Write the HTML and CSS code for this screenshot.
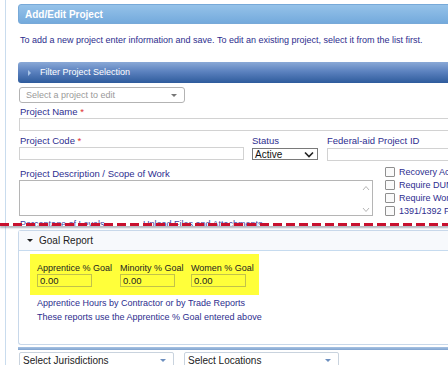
FILE: index.html
```html
<!DOCTYPE html>
<html>
<head>
<meta charset="utf-8">
<link rel="stylesheet" href="styles.css">
</head>
<body>
<div class="page">
  <div class="main">
    <div class="hdr">Add/Edit Project</div>
    <p class="intro">To add a new project enter information and save. To edit an existing project, select it from the list first.</p>
    <div class="filter"><span class="tri"></span>Filter Project Selection</div>
    <div class="combo"><span>Select a project to edit</span><span class="carr"></span></div>
    <div class="lbl">Project Name <span class="req">*</span></div>
    <div class="inp full"></div>
    <div class="row3">
      <div class="col code">
        <div class="lbl">Project Code <span class="req">*</span></div>
        <div class="inp"></div>
      </div>
      <div class="col status">
        <div class="lbl">Status</div>
        <div class="sel"><span>Active</span><svg class="chev" width="10" height="7" viewBox="0 0 10 7"><path d="M1 1.5 L5 5.5 L9 1.5" fill="none" stroke="#222" stroke-width="1.6"/></svg></div>
      </div>
      <div class="col fed">
        <div class="lbl">Federal-aid Project ID</div>
        <div class="inp"></div>
      </div>
    </div>
    <div class="descrow">
      <div class="desc">
        <div class="lbl">Project Description / Scope of Work</div>
        <div class="ta">
          <div class="sb">
            <svg width="8" height="6" viewBox="0 0 8 6"><path d="M1 5 L4 1.5 L7 5" fill="none" stroke="#b5b5b5" stroke-width="1"/></svg>
            <svg width="8" height="6" viewBox="0 0 8 6"><path d="M1 1 L4 4.5 L7 1" fill="none" stroke="#b5b5b5" stroke-width="1"/></svg>
          </div>
        </div>
      </div>
      <div class="checks">
        <div class="chk"><span class="box"></span>Recovery Act Project</div>
        <div class="chk"><span class="box"></span>Require DUNS Number</div>
        <div class="chk"><span class="box"></span>Require Workforce</div>
        <div class="chk"><span class="box"></span>1391/1392 Project</div>
      </div>
    </div>
    <div class="hidden-row"><span class="l">Percentage of Levels</span><span class="r">Upload Files and Attachments</span></div>
  </div>
  <div class="tear"></div>
  <div class="panel">
    <div class="phead"><span class="dtri"></span>Goal Report</div>
    <div class="pbody">
      <div class="yellow">
        <div class="goal">
          <div class="glbl">Apprentice % Goal</div>
          <div class="ginp">0.00</div>
        </div>
        <div class="goal">
          <div class="glbl">Minority % Goal</div>
          <div class="ginp">0.00</div>
        </div>
        <div class="goal">
          <div class="glbl">Women % Goal</div>
          <div class="ginp">0.00</div>
        </div>
      </div>
      <p class="note">Apprentice Hours by Contractor or by Trade Reports<br>These reports use the Apprentice % Goal entered above</p>
    </div>
  </div>
  <div class="bar"></div>
  <div class="bottom">
    <div class="bsel"><span>Select Jurisdictions</span><span class="barr"></span></div>
    <div class="bsel"><span>Select Locations</span><span class="barr"></span></div>
  </div>
</div>
</body>
</html>
```
FILE: styles.css
```css
* { box-sizing: border-box; }
html, body { margin: 0; padding: 0; background: #fff; }
body {
  width: 448px;
  height: 365px;
  overflow: hidden;
  font-family: "Liberation Sans", Arial, sans-serif;
  font-size: 9px;
  color: #2b2b8f;
}
.page {
  margin-left: 5px;
  border-left: 1px solid #c9dcee;
  padding-left: 12px;
  padding-top: 4px;
  height: 365px;
  width: 480px;
}
.main { position: relative; }
.hdr {
  height: 20px;
  line-height: 20px;
  padding-left: 6px;
  color: #fff;
  font-weight: bold;
  font-size: 10px;
  background: linear-gradient(#95c2e9, #74aadc);
  border: 1px solid #77a9d8;
  border-radius: 3px 0 0 3px;
}
.intro {
  margin: 11px 0 0 2px;
  height: 11px;
  line-height: 11px;
  font-size: 9px;
  color: #2d2d8e;
}
.filter {
  margin-top: 16px;
  height: 21px;
  line-height: 21px;
  color: #fff;
  font-size: 9px;
  padding-left: 10px;
  background: linear-gradient(#8aa9d7 0%, #5c82bf 45%, #2e5b9c 100%);
  border-radius: 3px 0 0 3px;
  display: flex;
  align-items: center;
}
.tri {
  width: 0; height: 0;
  border-top: 3px solid transparent;
  border-bottom: 3px solid transparent;
  border-left: 3px solid #a8c4e6;
  margin-right: 9px;
}
.combo {
  margin: 4px 0 0 1px;
  width: 166px;
  height: 16px;
  border: 1px solid #b3b3b3;
  border-radius: 3px;
  display: flex;
  align-items: center;
  justify-content: space-between;
  padding: 0 7px 0 6px;
  color: #9a9a9a;
  font-size: 9px;
}
.carr, .barr {
  width: 0; height: 0;
  border-left: 3px solid transparent;
  border-right: 3px solid transparent;
  border-top: 3px solid #777;
}
.lbl {
  font-size: 9.5px;
  height: 12px;
  line-height: 12px;
  color: #2e2e90;
  padding-left: 2px;
  white-space: nowrap;
}
.req { color: #e03030; }
.main > .lbl { margin-top: 3px; }
.inp {
  height: 13px;
  border: 1px solid #d2d2d2;
  margin-left: 1px;
  background: #fff;
}
.inp.full { width: 440px; }
.row3 {
  display: flex;
  margin-top: 4px;
}
.code { width: 234px; }
.code .inp { width: 225px; }
.status { width: 75px; }
.fed { width: 130px; }
.status .lbl, .fed .lbl { padding-left: 0; }
.status .sel {
  margin-top: 1px;
  width: 66px;
  height: 12px;
  border: 1px solid #7a7a7a;
  display: flex;
  align-items: center;
  justify-content: space-between;
  padding: 0 3px 0 2px;
  font-size: 10px;
  color: #111;
}
.fed .inp { margin-left: 0; margin-top: 1px; width: 130px; }
.descrow {
  display: flex;
  margin-top: 4px;
}
.desc { width: 367px; flex-shrink: 0; padding-top: 3px; }
.ta {
  margin: 0 0 0 1px;
  width: 354px;
  height: 36px;
  border: 1px solid #b5b5b5;
  display: flex;
  justify-content: flex-end;
}
.sb {
  width: 12px;
  display: flex;
  flex-direction: column;
  justify-content: space-between;
  align-items: center;
  padding: 4px 0 2px;
}
.checks { flex-shrink: 0; }
.chk {
  display: flex;
  align-items: center;
  height: 13px;
  font-size: 9px;
  color: #2e2e90;
  white-space: nowrap;
}
.box {
  width: 10px;
  height: 10px;
  border: 1px solid #8f8f8f;
  border-radius: 1px;
  margin-right: 4px;
  background: #fafafa;
}
.hidden-row {
  margin-top: 1px;
  height: 8px;
  overflow: hidden;
  display: flex;
  font-size: 9px;
  line-height: 12px;
  color: #4040a0;
  padding-left: 2px;
  white-space: nowrap;
}
.hidden-row .l { width: 123px; }
.tear {
  position: relative;
  margin-left: -18px;
  margin-top: -3px;
  height: 3px;
  width: 470px;
  background: repeating-linear-gradient(90deg, #c8102e 0 9px, transparent 9px 13px);
  box-shadow: 0 2px 2px rgba(80, 90, 110, 0.45);
}
.panel {
  margin-top: 4px;
  border: 1px solid #c8d8ea;
  border-right: none;
  border-radius: 3px 0 0 3px;
  height: 115px;
}
.phead {
  height: 20px;
  display: flex;
  align-items: center;
  padding-left: 8px;
  font-size: 10px;
  color: #222;
  background: #f7f9fc;
  border-bottom: 1px solid #c6dbef;
}
.dtri {
  width: 0; height: 0;
  border-left: 3px solid transparent;
  border-right: 3px solid transparent;
  border-top: 3px solid #222;
  margin-right: 6px;
}
.pbody { padding: 3px 0 0 11px; }
.yellow {
  width: 229px;
  height: 41px;
  background: #ffff3a;
  display: flex;
  padding: 8px 0 0 7px;
}
.goal { display: flex; flex-direction: column; }
.goal:nth-child(1) { width: 83px; }
.goal:nth-child(2) { width: 71px; }
.glbl {
  font-size: 9px;
  color: #222;
  height: 12px;
  line-height: 12px;
  white-space: nowrap;
}
.ginp {
  width: 55px;
  height: 13px;
  border: 1px solid #c2c24a;
  font-size: 9.5px;
  line-height: 11px;
  padding-left: 2px;
  color: #222;
}
.note {
  margin: 1px 0 0 7px;
  font-size: 9px;
  line-height: 14px;
  color: #2d2d8e;
}
.bar {
  margin-top: 2px;
  height: 3px;
  background: linear-gradient(#a9c3e2, #7fa3d0);
}
.bottom {
  display: flex;
  gap: 10px;
  margin-top: 2px;
  padding-left: 1px;
}
.bsel {
  width: 155px;
  height: 16px;
  border: 1px solid #c9d3de;
  border-radius: 2px;
  display: flex;
  align-items: center;
  justify-content: space-between;
  padding: 1px 7px 0 3px;
  font-size: 10px;
  color: #222;
}
.barr { border-top-color: #6d8fbf; }
```
